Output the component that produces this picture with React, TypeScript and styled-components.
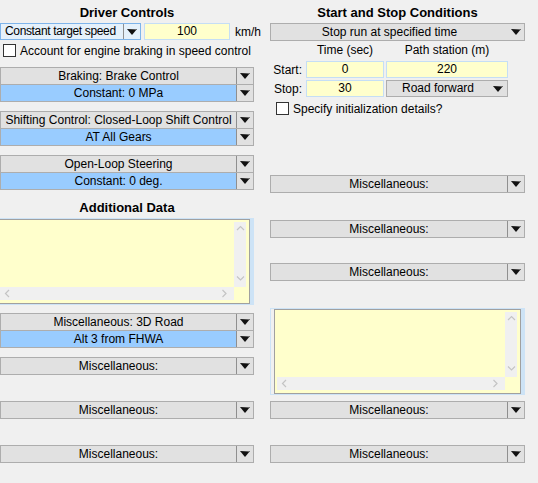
import React from 'react'
import styled, { createGlobalStyle } from 'styled-components'

const GlobalStyle = createGlobalStyle`
  html, body {
    margin: 0;
    padding: 0;
    background: #f0f0f0;
  }
  body {
    font-family: "Liberation Sans", Arial, sans-serif;
    font-size: 12px;
    color: #000;
  }
`

const Page = styled.div`
  width: 538px;
  height: 483px;
  overflow: hidden;
  display: grid;
  grid-template-columns: 254px 255px;
  column-gap: 16px;
  align-items: start;
`

const Column = styled.div`
  display: flex;
  flex-direction: column;
`

const Title = styled.div<{ $mt?: number }>`
  margin-top: ${({ $mt }) => $mt ?? 3}px;
  height: 20px;
  line-height: 20px;
  font-size: 13px;
  font-weight: bold;
  text-align: center;
  white-space: nowrap;
`

const Block = styled.div<{ $mt?: number }>`
  margin-top: ${({ $mt }) => $mt ?? 0}px;
`

// combo boxes
const ComboGroup = styled.div`
  border: 1px solid #adadad;
  background: #e1e1e1;
  display: flex;
  flex-direction: column;
`

const ComboRow = styled.div`
  display: flex;
  height: 16px;
  line-height: 16px;
  & + & {
    border-top: 1px solid #adadad;
  }
`

const ComboLabel = styled.div<{ $blue?: boolean }>`
  flex: 1;
  min-width: 0;
  text-align: center;
  white-space: nowrap;
  overflow: hidden;
  background: ${({ $blue }) => ($blue ? '#99ccff' : 'transparent')};
`

const ArrowCell = styled.div<{ $divider?: boolean; $w?: number }>`
  width: ${({ $w }) => $w ?? 16}px;
  flex: none;
  display: flex;
  align-items: center;
  justify-content: center;
  border-left: ${({ $divider }) => ($divider ? '1px solid #8f8f8f' : 'none')};
`

const Arrow = () => (
  <svg width="10" height="6" viewBox="0 0 10 6">
    <polygon points="0,0 10,0 5,6" fill="#111" />
    <polygon points="0,0 10,0 9.2,1" fill="#777" />
  </svg>
)

type ComboItem = { text: string; blue?: boolean }

const Combo = ({ rows, divider = true }: { rows: ComboItem[]; divider?: boolean }) => (
  <ComboGroup>
    {rows.map((r, i) => (
      <ComboRow key={i}>
        <ComboLabel $blue={r.blue}>{r.text}</ComboLabel>
        <ArrowCell $divider={divider}>
          <Arrow />
        </ArrowCell>
      </ComboRow>
    ))}
  </ComboGroup>
)

// top speed row
const SpeedRow = styled.div`
  display: flex;
  align-items: center;
  height: 17px;
  & > * {
    flex: none;
  }
`

const FocusSelect = styled.div`
  width: 139px;
  height: 15px;
  line-height: 15px;
  border: 1px solid #7eb4ea;
  background: #e5f1fb;
  display: flex;
`

const SelectText = styled.div`
  flex: 1;
  min-width: 0;
  padding-left: 4px;
  letter-spacing: -0.35px;
  white-space: nowrap;
  overflow: hidden;
`

const YellowInput = styled.div<{ $w: number; $ml?: number }>`
  width: ${({ $w }) => $w}px;
  margin-left: ${({ $ml }) => $ml ?? 0}px;
  height: 15px;
  line-height: 15px;
  border: 1px solid #c5def5;
  background: #ffffcc;
  text-align: center;
  box-sizing: content-box;
`

const Unit = styled.span`
  margin-left: 5px;
`

const CheckRow = styled.label<{ $mt: number; $ml: number }>`
  display: flex;
  align-items: center;
  gap: 4px;
  height: 13px;
  margin-top: ${({ $mt }) => $mt}px;
  margin-left: ${({ $ml }) => $ml}px;
  white-space: nowrap;
`

const Box = styled.span`
  width: 11px;
  height: 11px;
  border: 1px solid #333;
  background: #fff;
  flex: none;
`

// text area
const Frame = styled.div<{ $mt: number; $bleed?: boolean }>`
  margin-top: ${({ $mt }) => $mt}px;
  margin-left: ${({ $bleed }) => ($bleed ? -7 : 0)}px;
  border: 1px solid #cde3f6;
  border-right-width: 4px;
  padding-left: 3px;
`

const Memo = styled.div<{ $h: number }>`
  height: ${({ $h }) => $h}px;
  border: 1px solid #a0a0a0;
  background: #ffffcc;
  padding: 2px 3px 3px 2px;
  display: grid;
  grid-template-columns: 1fr 12px;
  grid-template-rows: 1fr 13px;
`

const Scroll = styled.div<{ $v?: boolean }>`
  background: #f0f0f0;
  display: flex;
  flex-direction: ${({ $v }) => ($v ? 'column' : 'row')};
  justify-content: space-between;
  align-items: center;
  padding: ${({ $v }) => ($v ? '3px 0' : '0 4px')};
`

const Corner = styled.div`
  background: #ffffcc;
`

const Chevron = ({ d }: { d: 'up' | 'down' | 'left' | 'right' }) => {
  const pts = {
    up: '1,5 4.5,1.5 8,5',
    down: '1,1.5 4.5,5 8,1.5',
    left: '5,1 1.5,4.5 5,8',
    right: '1.5,1 5,4.5 1.5,8',
  }[d]
  return (
    <svg width="9" height="9" viewBox="0 0 9 9">
      <polyline points={pts} fill="none" stroke="#c4c4c4" strokeWidth="1.2" />
    </svg>
  )
}

const TextArea = ({ mt, h, bleed }: { mt: number; h: number; bleed?: boolean }) => (
  <Frame $mt={mt} $bleed={bleed}>
    <Memo $h={h}>
      <div />
      <Scroll $v>
        <Chevron d="up" />
        <Chevron d="down" />
      </Scroll>
      <Scroll>
        <Chevron d="left" />
        <Chevron d="right" />
      </Scroll>
      <Corner />
    </Memo>
  </Frame>
)

// start/stop grid
const StopGrid = styled.div`
  display: grid;
  grid-template-columns: 34px 78px 122px;
  column-gap: 2px;
  row-gap: 2px;
  align-items: center;
`

const HeadCell = styled.div`
  height: 18px;
  line-height: 18px;
  text-align: center;
  white-space: nowrap;
`

const RowLabel = styled.div`
  text-align: right;
  padding-right: 2px;
  white-space: nowrap;
`

const SmallCombo = styled.div`
  height: 15px;
  line-height: 15px;
  border: 1px solid #adadad;
  background: #e1e1e1;
  display: flex;
`

export default function App() {
  return (
    <>
      <GlobalStyle />
      <Page>
        <Column>
          <Title>Driver Controls</Title>
          <SpeedRow>
            <FocusSelect>
              <SelectText>Constant target speed</SelectText>
              <ArrowCell $divider>
                <Arrow />
              </ArrowCell>
            </FocusSelect>
            <YellowInput $w={84} $ml={3}>
              100
            </YellowInput>
            <Unit>km/h</Unit>
          </SpeedRow>
          <CheckRow $mt={4} $ml={3}>
            <Box />
            Account for engine braking in speed control
          </CheckRow>
          <Block $mt={10}>
            <Combo rows={[{ text: 'Braking: Brake Control' }, { text: 'Constant: 0 MPa', blue: true }]} />
          </Block>
          <Block $mt={9}>
            <Combo
              rows={[{ text: 'Shifting Control: Closed-Loop Shift Control' }, { text: 'AT All Gears', blue: true }]}
            />
          </Block>
          <Block $mt={9}>
            <Combo rows={[{ text: 'Open-Loop Steering' }, { text: 'Constant: 0 deg.', blue: true }]} />
          </Block>
          <Title $mt={8}>Additional Data</Title>
          <TextArea mt={0} h={78} bleed />
          <Block $mt={8}>
            <Combo rows={[{ text: 'Miscellaneous: 3D Road' }, { text: 'Alt 3 from FHWA', blue: true }]} />
          </Block>
          <Block $mt={9}>
            <Combo rows={[{ text: 'Miscellaneous:' }]} />
          </Block>
          <Block $mt={26}>
            <Combo rows={[{ text: 'Miscellaneous:' }]} />
          </Block>
          <Block $mt={26}>
            <Combo rows={[{ text: 'Miscellaneous:' }]} />
          </Block>
        </Column>

        <Column>
          <Title>Start and Stop Conditions</Title>
          <Combo rows={[{ text: 'Stop run at specified time' }]} divider={false} />
          <StopGrid>
            <div />
            <HeadCell>Time (sec)</HeadCell>
            <HeadCell>Path station (m)</HeadCell>
            <RowLabel>Start:</RowLabel>
            <YellowInput $w={76}>0</YellowInput>
            <YellowInput $w={120}>220</YellowInput>
            <RowLabel>Stop:</RowLabel>
            <YellowInput $w={76}>30</YellowInput>
            <SmallCombo>
              <ComboLabel>Road forward</ComboLabel>
              <ArrowCell $w={18}>
                <Arrow />
              </ArrowCell>
            </SmallCombo>
          </StopGrid>
          <CheckRow $mt={5} $ml={6}>
            <Box />
            Specify initialization details?
          </CheckRow>
          <Block $mt={60}>
            <Combo rows={[{ text: 'Miscellaneous:' }]} />
          </Block>
          <Block $mt={27}>
            <Combo rows={[{ text: 'Miscellaneous:' }]} />
          </Block>
          <Block $mt={25}>
            <Combo rows={[{ text: 'Miscellaneous:' }]} />
          </Block>
          <TextArea mt={27} h={78} />
          <Block $mt={6}>
            <Combo rows={[{ text: 'Miscellaneous:' }]} />
          </Block>
          <Block $mt={26}>
            <Combo rows={[{ text: 'Miscellaneous:' }]} />
          </Block>
        </Column>
      </Page>
    </>
  )
}
